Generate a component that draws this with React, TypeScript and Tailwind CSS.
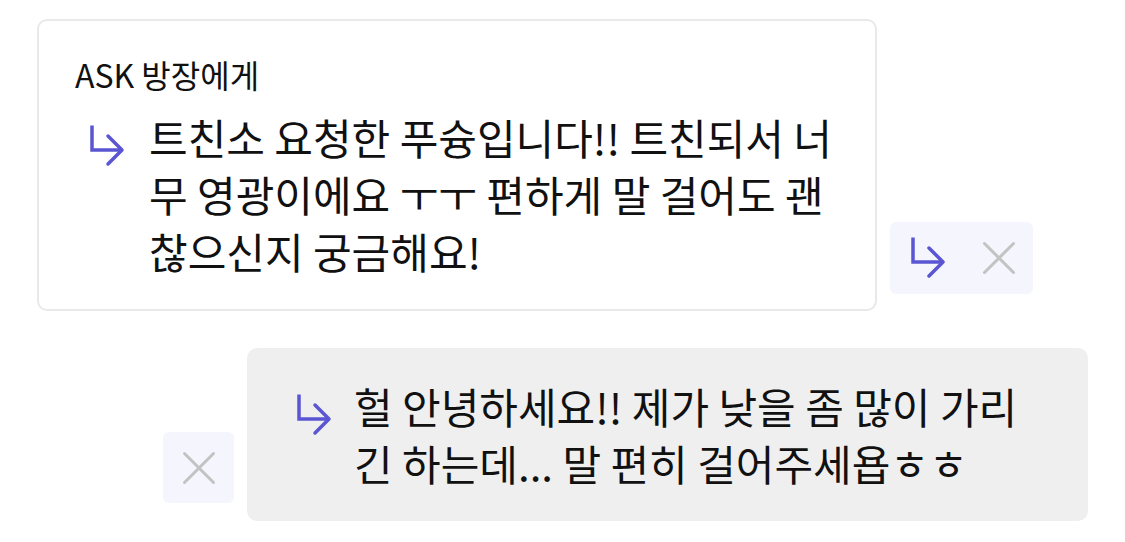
import React from 'react'

function ReplyArrow({ className = '' }: { className?: string }) {
    return (
        <svg width="36" height="44" viewBox="0 0 36 44" fill="none" className={className}>
            <path d="M3 1.5V26H33" stroke="#5a55d2" strokeWidth="3.5" strokeLinejoin="miter" />
            <path d="M19 12L33 26L19 40" stroke="#5a55d2" strokeWidth="3.5" strokeLinecap="round" strokeLinejoin="round" />
        </svg>
    )
}

function CloseIcon() {
    return (
        <svg width="34" height="34" viewBox="0 0 34 34" fill="none">
            <path d="M2.5 2.5L31.5 31.5M31.5 2.5L2.5 31.5" stroke="#c3c3c3" strokeWidth="3" strokeLinecap="round" />
        </svg>
    )
}

function Lines({ lines }: { lines: string[] }) {
    return (
        <div className="text-[42px] leading-[57px] text-[#111111]">
            {lines.map((l) => (
                <div key={l} className="whitespace-nowrap">
                    {l}
                </div>
            ))}
        </div>
    )
}

export default function App() {
    return (
        <div className="min-h-screen bg-white px-[37px] pt-[19px] font-['Noto_Sans_CJK_KR','Noto_Sans',sans-serif]">
            {/* incoming question */}
            <div className="flex items-end gap-[13px]">
                <div className="w-[840px] rounded-[10px] border-2 border-[#e9e9e9] bg-white pb-[30px] pl-[36px] pt-[32px]">
                    <p className="text-[32px] leading-[42px] text-[#111111]">ASK 방장에게</p>
                    <div className="mt-[13px] flex items-start pl-[14px]">
                        <ReplyArrow className="mr-[24px] mt-[16px] shrink-0" />
                        <Lines
                            lines={[
                                '트친소 요청한 푸슝입니다!! 트친되서 너',
                                '무 영광이에요 ㅜㅜ 편하게 말 걸어도 괜',
                                '찮으신지 궁금해요!',
                            ]}
                        />
                    </div>
                </div>
                <div className="mb-[17px] flex h-[72px] items-center gap-[36px] rounded-[6px] bg-[#f5f5fd] pl-[20px] pr-[17px]">
                    <ReplyArrow />
                    <CloseIcon />
                </div>
            </div>

            {/* my answer */}
            <div className="mt-[37px] flex items-end justify-end gap-[13px]">
                <div className="mb-[18px] flex h-[71px] w-[71px] items-center justify-center rounded-[6px] bg-[#f5f5fd]">
                    <CloseIcon />
                </div>
                <div className="flex w-[841px] items-start rounded-[10px] bg-[#efefef] pb-[30px] pl-[49px] pt-[29px]">
                    <ReplyArrow className="mr-[22px] mt-[16px] shrink-0" />
                    <Lines lines={['헐 안녕하세요!! 제가 낮을 좀 많이 가리', '긴 하는데... 말 편히 걸어주세욥ㅎㅎ']} />
                </div>
            </div>
        </div>
    )
}
